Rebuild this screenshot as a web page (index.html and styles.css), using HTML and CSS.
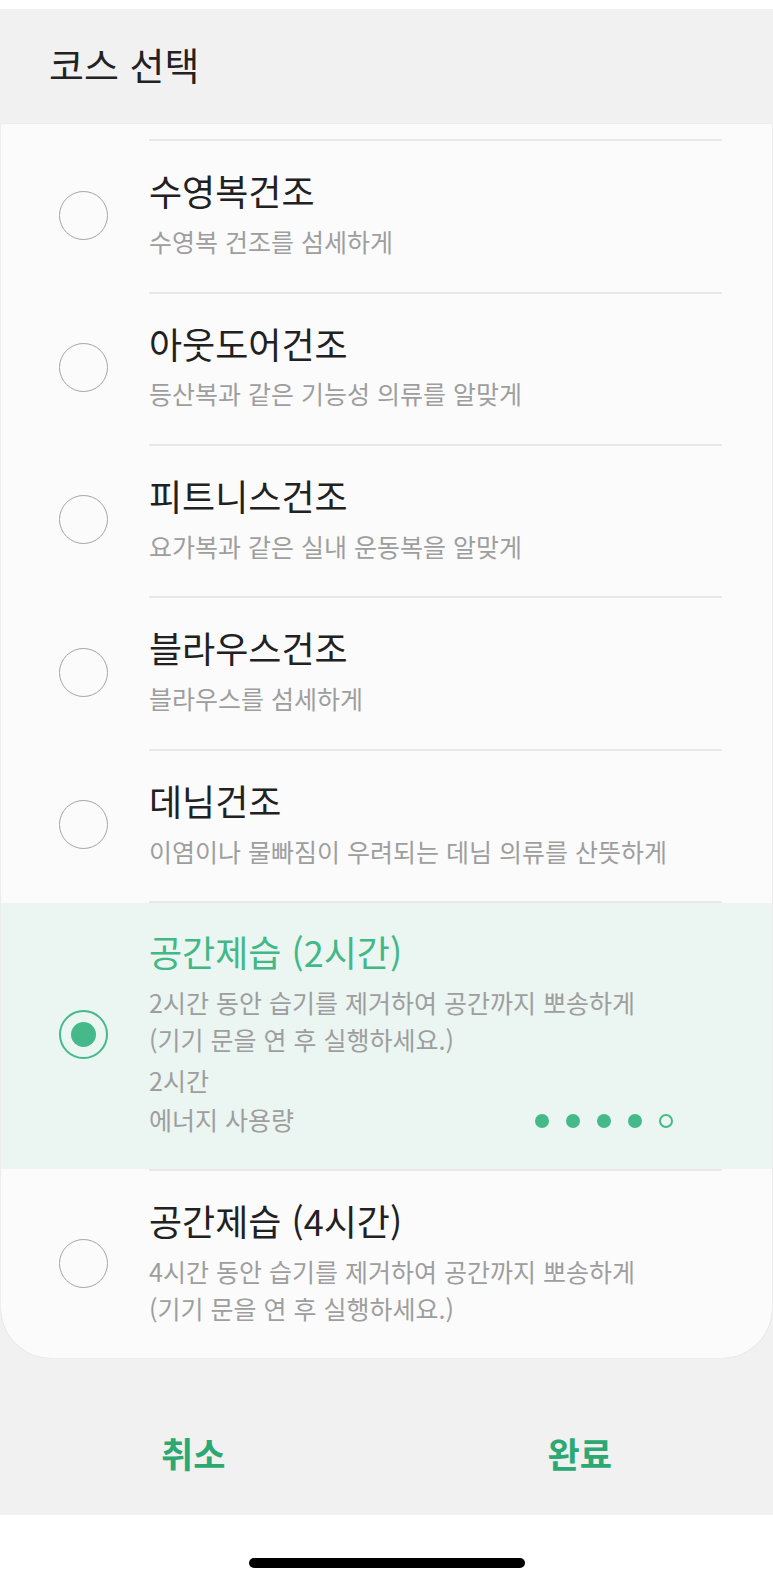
FILE: index.html
```html
<!DOCTYPE html>
<html lang="ko">
<head>
<meta charset="utf-8">
<title>코스 선택</title>
<link rel="stylesheet" href="styles.css">
</head>
<body>
<div class="screen">
  <div class="status"></div>
  <div class="sheet">
    <header class="sheet-header">
      <h1 class="sheet-title">코스 선택</h1>
    </header>
    <div class="card">
      <div class="divider"></div>
      <div class="row">
        <span class="radio"></span>
        <div class="text">
          <div class="title">수영복건조</div>
          <div class="desc">수영복 건조를 섬세하게</div>
        </div>
      </div>
      <div class="divider"></div>
      <div class="row">
        <span class="radio"></span>
        <div class="text">
          <div class="title">아웃도어건조</div>
          <div class="desc">등산복과 같은 기능성 의류를 알맞게</div>
        </div>
      </div>
      <div class="divider"></div>
      <div class="row">
        <span class="radio"></span>
        <div class="text">
          <div class="title">피트니스건조</div>
          <div class="desc">요가복과 같은 실내 운동복을 알맞게</div>
        </div>
      </div>
      <div class="divider"></div>
      <div class="row">
        <span class="radio"></span>
        <div class="text">
          <div class="title">블라우스건조</div>
          <div class="desc">블라우스를 섬세하게</div>
        </div>
      </div>
      <div class="divider"></div>
      <div class="row">
        <span class="radio"></span>
        <div class="text">
          <div class="title">데님건조</div>
          <div class="desc">이염이나 물빠짐이 우려되는 데님 의류를 산뜻하게</div>
        </div>
      </div>
      <div class="divider"></div>
      <div class="row row-selected">
        <span class="radio radio-on"></span>
        <div class="text">
          <div class="title">공간제습 (2시간)</div>
          <div class="desc">2시간 동안 습기를 제거하여 공간까지 뽀송하게<br>(기기 문을 연 후 실행하세요.)</div>
          <div class="meta">2시간</div>
          <div class="energy">
            <span class="energy-label">에너지 사용량</span>
            <span class="dots">
              <span class="dot"></span>
              <span class="dot"></span>
              <span class="dot"></span>
              <span class="dot"></span>
              <span class="dot dot-empty"></span>
            </span>
          </div>
        </div>
      </div>
      <div class="divider"></div>
      <div class="row">
        <span class="radio"></span>
        <div class="text">
          <div class="title">공간제습 (4시간)</div>
          <div class="desc">4시간 동안 습기를 제거하여 공간까지 뽀송하게<br>(기기 문을 연 후 실행하세요.)</div>
        </div>
      </div>
    </div>
    <footer class="actions">
      <button class="action">취소</button>
      <button class="action">완료</button>
    </footer>
  </div>
  <div class="home-area">
    <span class="home-indicator"></span>
  </div>
</div>
</body>
</html>
```
FILE: styles.css
```css
* {
  box-sizing: border-box;
}

html, body {
  margin: 0;
  padding: 0;
  background: #ffffff;
}

body {
  font-family: "Noto Sans CJK KR", "Noto Sans", sans-serif;
  color: #212121;
}

.screen {
  width: 773px;
  height: 1586px;
  display: flex;
  flex-direction: column;
  overflow: hidden;
}

.status {
  height: 9px;
  background: #ffffff;
}

.sheet {
  background: #f1f1f1;
  display: flex;
  flex-direction: column;
}

.sheet-header {
  height: 115px;
  padding: 35px 0 0 49px;
}

.sheet-title {
  margin: 0;
  font-size: 38px;
  line-height: 40px;
  font-weight: 400;
  color: #222222;
}

.card {
  margin: 0 1px;
  padding-top: 15.3px;
  background: #fbfbfb;
  border-radius: 0 0 50px 50px;
  box-shadow: 0 0 1px rgba(0, 0, 0, 0.18);
}

.divider {
  height: 2px;
  margin: 0 50px 0 148px;
  background: #e8e8e8;
}

.row {
  display: flex;
  align-items: center;
  padding: 29px 50px 31.6px 57.5px;
}

.row-selected {
  background: #ebf5f1;
  padding-top: 28px;
  padding-bottom: 31px;
}

.radio {
  flex: none;
  width: 49px;
  height: 49px;
  border-radius: 50%;
  border: 1.6px solid #a4a4a4;
  display: flex;
  align-items: center;
  justify-content: center;
  margin-right: 41.5px;
}

.radio-on {
  border: 2px solid #45b98a;
}

.radio-on::after {
  content: "";
  width: 25px;
  height: 25px;
  border-radius: 50%;
  background: #45b98a;
}

.text {
  flex: 1;
  min-width: 0;
}

.title {
  font-size: 36px;
  line-height: 40px;
  color: #212121;
  white-space: nowrap;
}

.row-selected .title {
  color: #43b887;
}

.desc {
  margin-top: 12.8px;
  font-size: 25px;
  line-height: 37px;
  color: #9e9e9e;
  white-space: nowrap;
}

.meta {
  margin-top: 4px;
  font-size: 25px;
  line-height: 37px;
  color: #9e9e9e;
}

.energy {
  margin-top: 2px;
  display: flex;
  align-items: center;
  justify-content: space-between;
  font-size: 25px;
  line-height: 37px;
  color: #9e9e9e;
}

.dots {
  display: flex;
  gap: 17px;
  margin-right: 49px;
  margin-top: 2px;
}

.dot {
  width: 14px;
  height: 14px;
  border-radius: 50%;
  background: #45b98a;
}

.dot-empty {
  background: transparent;
  border: 2px solid #45b98a;
}

.actions {
  height: 156.5px;
  display: flex;
  padding-top: 74.5px;
}

.action {
  flex: 1;
  border: none;
  background: transparent;
  padding: 0;
  margin: 0;
  height: 40px;
  font-family: "Noto Sans CJK KR", "Noto Sans", sans-serif;
  font-size: 35px;
  line-height: 40px;
  font-weight: 700;
  color: #2ca872;
}

.home-area {
  flex: 1;
  background: #ffffff;
  display: flex;
  justify-content: center;
  padding-top: 43.5px;
}

.home-indicator {
  width: 276px;
  height: 10px;
  border-radius: 5px;
  background: #000000;
}
```
